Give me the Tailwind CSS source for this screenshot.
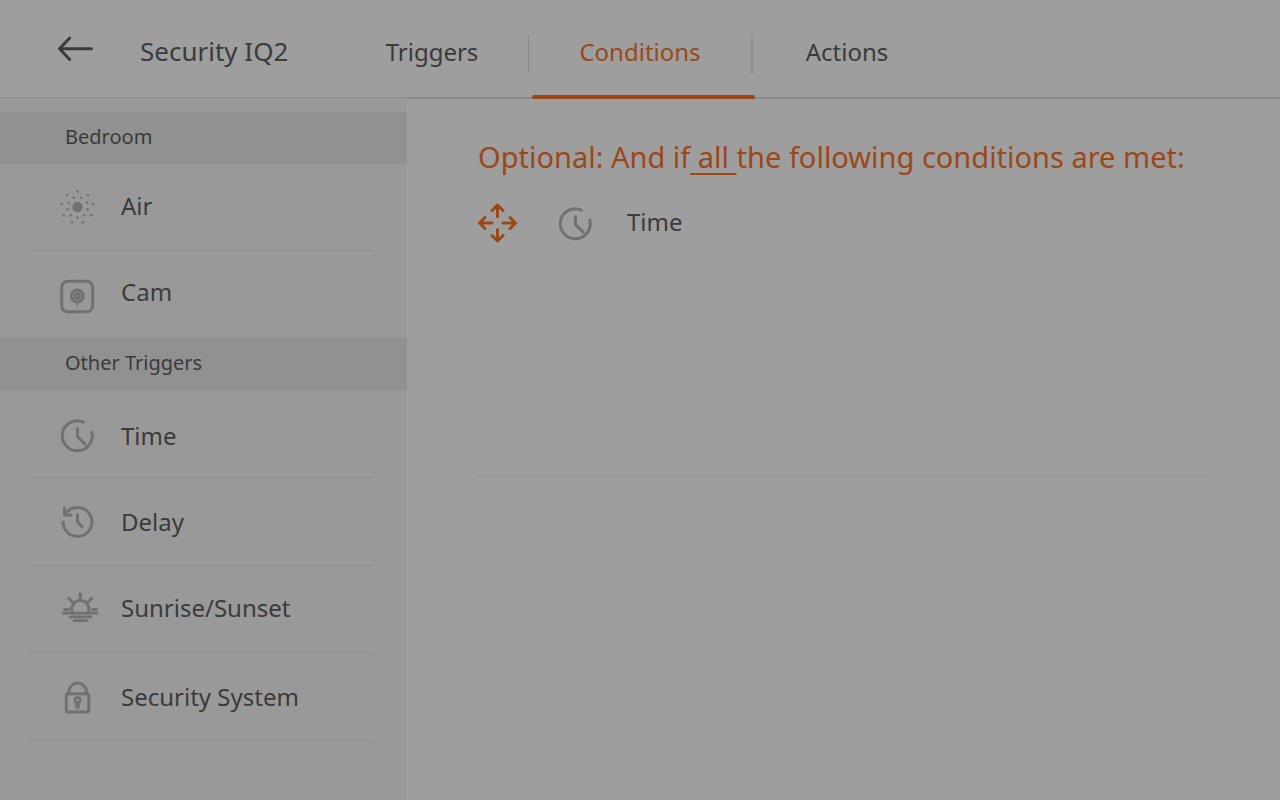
<!DOCTYPE html>
<html lang="en">
<head>
<meta charset="utf-8">
<meta name="viewport" content="width=device-width, initial-scale=1">
<title>Security IQ2</title>
<script src="https://cdn.jsdelivr.net/npm/@tailwindcss/browser@4"></script>
</head>
<body class="flex min-h-screen flex-col bg-[#9e9e9e] font-['Noto_Sans',sans-serif] text-[#3b3b3b]">
<svg class="hidden" aria-hidden="true">
  <symbol id="clock" viewBox="0 0 48 48">
    <g fill="none" stroke="currentColor" stroke-width="3" stroke-linecap="round" stroke-linejoin="round">
      <path d="M27.4 11.1A15 15 0 1 0 35.8 21.2"/>
      <path d="M21.5 17.5v8l7.5 7.5"/>
    </g>
  </symbol>
</svg>

<header class="flex h-[98px] shrink-0 items-stretch border-b border-[#8b8b8b]">
  <button type="button" aria-label="Back" class="ml-[56px] mr-[44px] self-center">
    <svg class="block h-10 w-10" viewBox="0 0 40 40" fill="none" stroke="currentColor" stroke-width="3" stroke-linecap="round" stroke-linejoin="round"><path d="M35.500 19.700H3.500M13.700 9L3.500 19.700L13.700 30.500"/></svg>
  </button>
  <h1 class="mt-[5px] w-[196px] self-center text-[26px] leading-9 whitespace-nowrap">Security IQ2</h1>
  <nav class="flex pt-[7px] text-[24px]" aria-label="Rule steps">
    <a href="#triggers" class="flex w-[192px] items-center justify-center">Triggers</a>
    <span class="mt-1 h-[38px] w-px self-center bg-[#8b8b8b]"></span>
    <a href="#conditions" aria-current="page" class="relative flex w-[222px] items-center justify-center text-[#9b4819]">Conditions
      <span class="absolute -bottom-[2px] left-[3px] h-1 w-[223px] rounded-full bg-[#9b4819]"></span>
    </a>
    <span class="mt-1 h-[38px] w-[2px] self-center bg-[#8f8f8f]"></span>
    <a href="#actions" class="flex w-[188px] items-center justify-center">Actions</a>
  </nav>
</header>

<div class="flex grow">
  <aside class="w-[407px] shrink-0 bg-[#999999] pt-[14px]">
    <h2 class="flex h-[52px] items-center bg-[#919191] pb-[2px] pl-[65px] text-[20px]">Bedroom</h2>
    <ul class="text-[24px]">
      <li class="mr-[33px] ml-7 h-[87px] border-b border-[#8f8f8f]">
        <button type="button" class="flex h-full w-full items-center gap-[17px] pl-7">
          <svg class="h-12 w-12 text-[#717171]" viewBox="0 0 48 48" fill="currentColor">
            <circle cx="21.500" cy="24" r="5.200"/>
            <g>
              <circle cx="21.500" cy="8.300" r="1.300"/><circle cx="11" cy="12" r="1.300"/><circle cx="32" cy="12" r="1.300"/>
              <circle cx="17.800" cy="14.800" r="1.200"/><circle cx="25" cy="14.800" r="1.200"/>
              <circle cx="5.700" cy="21.300" r="1.300"/><circle cx="12.500" cy="19.500" r="1.200"/><circle cx="31" cy="19.500" r="1.200"/><circle cx="37.200" cy="21.300" r="1.300"/>
              <circle cx="11.500" cy="26.200" r="1.200"/><circle cx="31.500" cy="26.200" r="1.200"/>
              <circle cx="7.500" cy="32.300" r="1.300"/><circle cx="14.800" cy="32.300" r="1.200"/><circle cx="28.300" cy="32.300" r="1.200"/><circle cx="35.200" cy="32.300" r="1.300"/>
              <circle cx="21.500" cy="34.700" r="1.200"/><circle cx="16" cy="39.300" r="1.300"/><circle cx="26.800" cy="39.300" r="1.300"/>
            </g>
          </svg>
          <span class="pb-[2px]">Air</span>
        </button>
      </li>
      <li class="mr-[33px] ml-7 h-[87px]">
        <button type="button" class="flex h-full w-full items-center gap-[17px] pb-[5px] pl-7">
          <svg class="h-12 w-12 text-[#717171]" viewBox="0 0 48 48" fill="none" stroke="currentColor">
            <rect x="5.700" y="13.200" width="31" height="30.500" rx="6" stroke-width="3"/>
            <circle cx="21.300" cy="28" r="7.500" fill="currentColor" stroke="none"/>
            <circle cx="21.300" cy="28" r="4.500" stroke="#8c8c8c" stroke-width="0.800"/>
            <circle cx="21.300" cy="28" r="0.900" fill="#8c8c8c" stroke="none"/>
            <path d="M21.300 35v2" stroke-width="1.600" stroke-linecap="round"/>
          </svg>
          <span>Cam</span>
        </button>
      </li>
    </ul>
    <h2 class="flex h-[52px] items-center bg-[#919191] pb-[2px] pl-[65px] text-[20px]">Other Triggers</h2>
    <ul class="text-[24px]">
      <li class="mr-[33px] ml-7 h-[88px] border-b border-[#8f8f8f] pt-[2px]">
        <button type="button" class="flex h-full w-full items-center gap-[17px] pl-7">
          <svg class="h-12 w-12 text-[#717171]"><use href="#clock"/></svg>
          <span class="pt-[2px]">Time</span>
        </button>
      </li>
      <li class="mr-[33px] ml-7 h-[88px] border-b border-[#8f8f8f]">
        <button type="button" class="flex h-full w-full items-center gap-[17px] pl-7">
          <svg class="h-12 w-12 text-[#717171]" viewBox="0 0 48 48" fill="none" stroke="currentColor" stroke-width="3" stroke-linecap="round" stroke-linejoin="round">
            <path d="M7 24.300A14.500 14.500 0 1 0 9.500 15.800"/>
            <path d="M8.500 10v7h6.500"/>
            <path d="M21.500 16.500v7.500l4.500 4.700"/>
          </svg>
          <span>Delay</span>
        </button>
      </li>
      <li class="mr-[33px] ml-7 h-[87px] border-b border-[#8f8f8f]">
        <button type="button" class="flex h-full w-full items-center gap-[17px] pl-7">
          <svg class="h-12 w-12 text-[#717171]" viewBox="0 0 48 48" fill="none" stroke="currentColor" stroke-width="3" stroke-linecap="round">
            <path d="M7.500 28.200h33.500M8.500 24.500h4M36.500 24.500h4M14 31.900h21M18 35.600h13" stroke-width="2.800"/>
            <path d="M16.800 28a8.500 8.500 0 1 1 15 0"/>
            <path d="M24.300 8.800v4.700M12.700 13.300l3.800 3.700M35.800 13.300l-3.800 3.700"/>
          </svg>
          <span class="pb-[2px]">Sunrise/Sunset</span>
        </button>
      </li>
      <li class="mr-[33px] ml-7 h-[88px] border-b border-[#8f8f8f]">
        <button type="button" class="flex h-full w-full items-center gap-[17px] pl-7">
          <svg class="h-12 w-12 text-[#717171]" viewBox="0 0 48 48" fill="none" stroke="currentColor" stroke-width="3">
            <rect x="10.300" y="20.800" width="22.500" height="18.300" rx="1.800"/>
            <path d="M12.700 20.500v-1.500a8.900 8.900 0 0 1 17.800 0v1.500"/>
            <circle cx="21.600" cy="27.300" r="2.600" stroke-width="2.800"/>
            <path d="M21.600 30.500v3.300" stroke-width="4.800" stroke-linecap="round"/>
          </svg>
          <span>Security System</span>
        </button>
      </li>
    </ul>
  </aside>

  <main class="min-w-0 grow border-t border-[#8b8b8b]">
    <section class="mr-[72px] ml-[72px] h-[378px] border-b border-[#929292] pt-[38px]">
      <h2 class="-ml-px text-[29px] leading-10 whitespace-nowrap text-[#9b4819]">Optional: And if<button type="button" class="whitespace-pre underline decoration-2 underline-offset-[5px]"> all </button>the following conditions are met:</h2>
      <div class="mt-[22px] -ml-px flex items-center text-[24px]">
        <button type="button" aria-label="Move condition" class="text-[#9b4819]">
          <svg class="block h-12 w-12" viewBox="0 0 48 48" fill="none" stroke="currentColor" stroke-width="3" stroke-linecap="round" stroke-linejoin="round">
            <path d="M19.500 17.500V6.500M14 11.500l5.500-5.500 5.500 5.500M19.500 30.500v11M14 36.500l5.500 5.500 5.500-5.500M14 24H2M7 18.500L1.500 24 7 29.500M25 24h12M32 18.500l5.500 5.500-5.500 5.500"/>
          </svg>
        </button>
        <svg class="ml-[28px] h-12 w-12 text-[#717171]"><use href="#clock"/></svg>
        <span class="ml-[25px] pb-[2px]">Time</span>
      </div>
    </section>
  </main>
</div>
</body>
</html>
